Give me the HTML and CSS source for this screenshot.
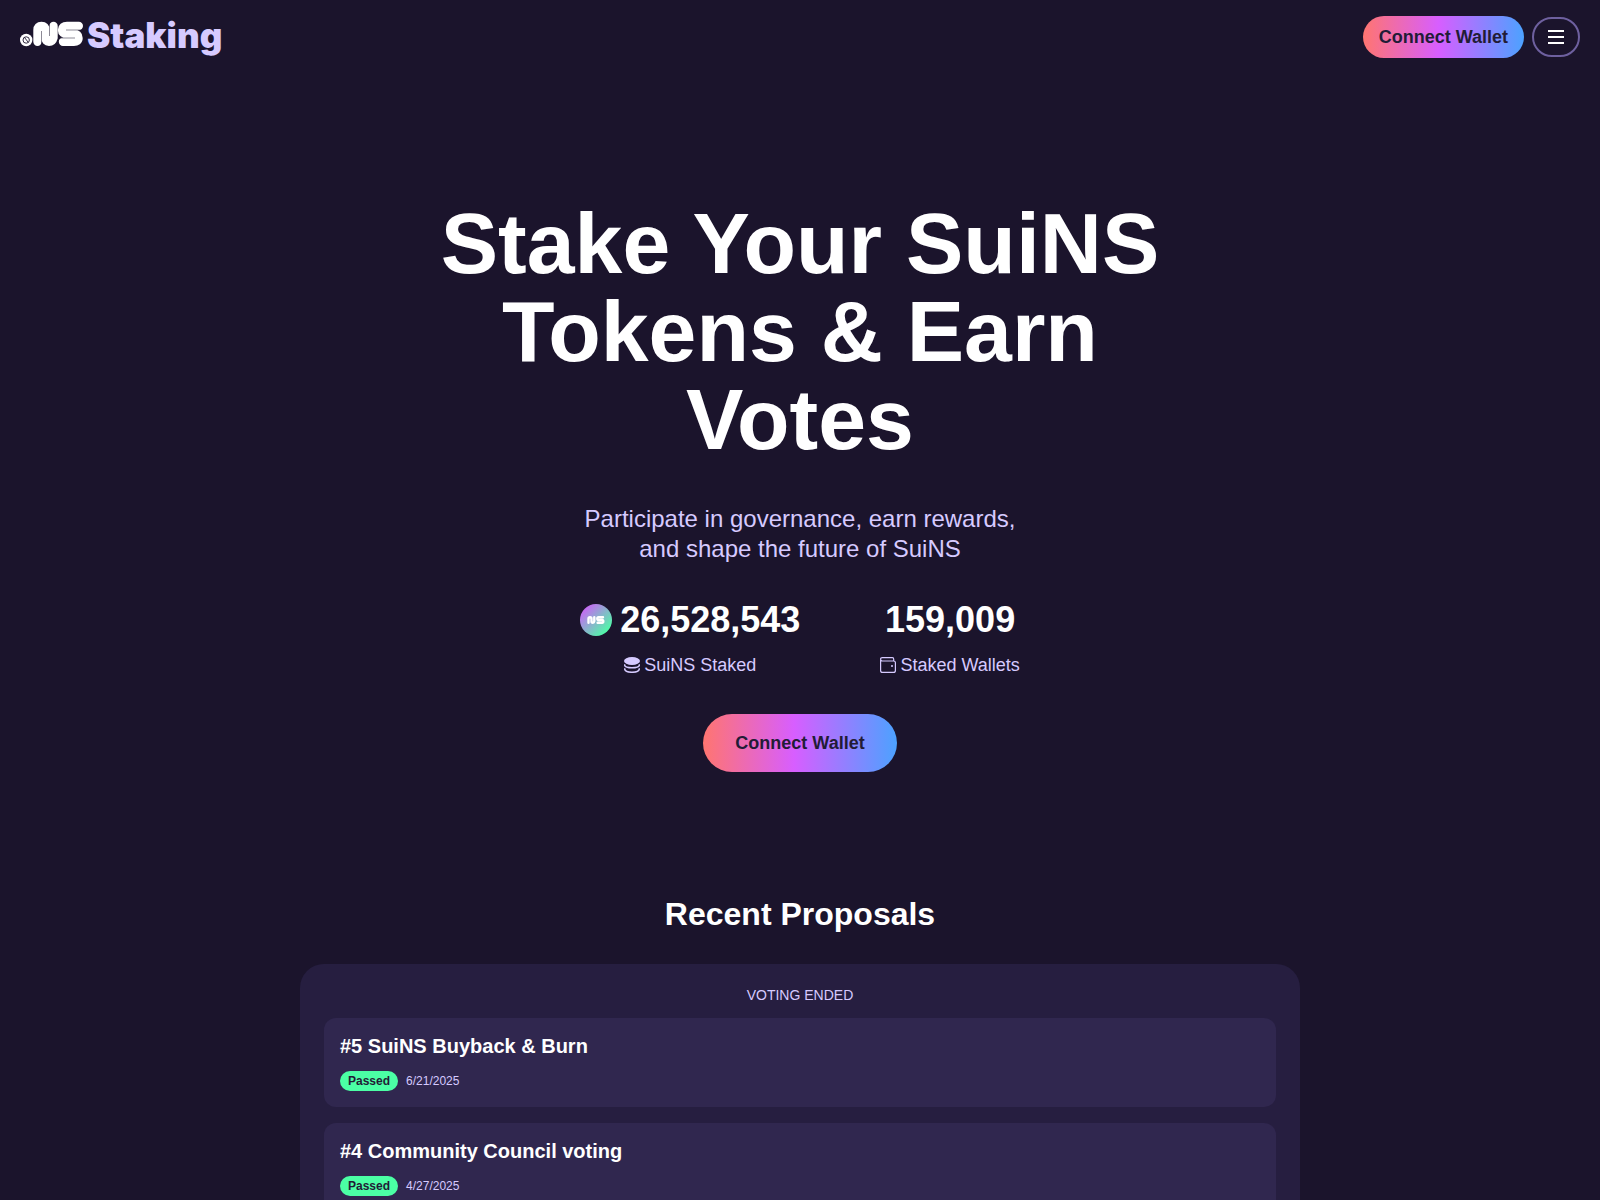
FILE: index.html
```html
<!DOCTYPE html>
<html lang="en">
<head>
<meta charset="utf-8">
<meta name="viewport" content="width=device-width, initial-scale=1">
<title>SuiNS Staking</title>
<link rel="stylesheet" href="styles.css">
</head>
<body>
<header class="header">
  <a class="brand" href="#">
    <svg class="brand-mark" width="64" height="32" viewBox="0 0 64 32" aria-label="SuiNS">
      <circle cx="6.200" cy="20" r="6.200" fill="#fff"/>
      <circle cx="6.200" cy="20" r="3.200" fill="none" stroke="#1b142c" stroke-width="0.900"/>
      <path d="M4.500 17.500l3.500 4.500" stroke="#1b142c" stroke-width="0.900"/>
      <g fill="none" stroke="#fff" stroke-width="8.400" stroke-linecap="round" stroke-linejoin="round">
        <path d="M17.500 21.800V10q0-4 4-4t4 4v7.800q0 4 3.500 4t4.500-4V6"/>
        <path d="M58.800 6H47q-5 0-5 4t5 4h7q4.500 0 4.500 4t-5 3.800H43"/>
      </g>
      <path d="M21.500 11v14M29.500 3v13M46 10h17M39 18h16" stroke="#1b142c" stroke-width="0.500"/>
    </svg>
    <span class="brand-name">Staking</span>
  </a>
  <div class="header-actions">
    <button class="button" type="button">Connect Wallet</button>
    <button class="menu-button" type="button" aria-label="Menu">
      <svg width="16" height="14" viewBox="0 0 16 14"><path d="M0 1h16M0 7h16M0 13h16" stroke="#fff" stroke-width="2"/></svg>
    </button>
  </div>
</header>
<main>
  <section class="hero">
    <h1 class="hero-title">Stake Your SuiNS Tokens &amp; Earn Votes</h1>
    <p class="hero-text">Participate in governance, earn rewards, and shape the future of SuiNS</p>
    <div class="stats">
      <div class="stat">
        <div class="stat-value">
          <svg width="32" height="32" viewBox="0 0 32 32" aria-hidden="true">
            <defs><linearGradient id="token" x1="0.100" y1="0.150" x2="0.850" y2="0.900"><stop offset="0" stop-color="#c966f5"/><stop offset="1" stop-color="#4bffa5"/></linearGradient></defs>
            <circle cx="16" cy="16" r="16" fill="url(#token)"/>
            <g fill="none" stroke="#fff" stroke-width="2.400" stroke-linecap="round" stroke-linejoin="round"><path d="M8.500 18.700v-4q0-1.500 1.500-1.500t1.500 1.500v2.500q0 1.500 1.300 1.500t1.500-1.500v-4"/><path d="M23 13.200h-4.500q-1.200 0-1.200 1.400t1.200 1.400h3.600q1.200 0 1.200 1.400t-1.200 1.300h-4.500"/></g>
          </svg>
          <span>26,528,543</span>
        </div>
        <div class="stat-label">
          <svg width="16" height="16" viewBox="0 0 16 16" aria-hidden="true"><ellipse cx="8" cy="4" rx="8" ry="4" fill="#d6caff"/><path d="M.6 7.200v.6c0 4 14.800 4 14.800 0v-.6M.6 11.300c0 5.300 14.800 5.300 14.800 0" fill="none" stroke="#d6caff" stroke-width="1.500"/></svg>
          <span>SuiNS Staked</span>
        </div>
      </div>
      <div class="stat">
        <div class="stat-value"><span>159,009</span></div>
        <div class="stat-label">
          <svg width="16" height="16" viewBox="0 0 16 16" aria-hidden="true"><path d="M.6 3v10.400q0 2 2 2h10.800q2 0 2-2V5.600q0-1.600-2-1.600H2.400Q.6 4 .6 2.300T2.400.6h10q1.300 0 1.300 1.600V4" fill="none" stroke="#d6caff" stroke-width="1.200"/><rect x="11" y="8" width="2" height="2" rx="1" fill="#d6caff"/></svg>
          <span>Staked Wallets</span>
        </div>
      </div>
    </div>
    <button class="button button-large" type="button">Connect Wallet</button>
  </section>
  <section class="proposals">
    <h2 class="proposals-title">Recent Proposals</h2>
    <div class="panel">
      <h3 class="panel-title">VOTING ENDED</h3>
      <a class="proposal" href="#">
        <h4 class="proposal-title">#5 SuiNS Buyback &amp; Burn</h4>
        <div class="proposal-meta"><span class="badge">Passed</span><time datetime="2025-06-21">6/21/2025</time></div>
      </a>
      <a class="proposal" href="#">
        <h4 class="proposal-title">#4 Community Council voting</h4>
        <div class="proposal-meta"><span class="badge">Passed</span><time datetime="2025-04-27">4/27/2025</time></div>
      </a>
    </div>
  </section>
</main>
</body>
</html>
```
FILE: styles.css
```css
* { box-sizing: border-box; }
body {
  margin: 0;
  background: #1b142c;
  color: #fff;
  font-family: "Liberation Sans", Arial, sans-serif;
  font-size: 18px;
}
h1, h2, h3, h4, p { margin: 0; }
a { color: inherit; text-decoration: none; }
svg { display: block; flex: none; }
.header {
  display: flex;
  align-items: center;
  justify-content: space-between;
  padding: 16px 20px;
}
.brand { display: flex; align-items: center; gap: 3px; }
.brand-name {
  font-family: Inter, sans-serif;
  font-size: 35px;
  font-weight: 900;
  line-height: 38px;
  padding-bottom: 4px;
  color: #d6caff;
}
.brand-mark { margin-bottom: 2px; }
.header-actions { display: flex; align-items: center; gap: 8px; }
.button {
  border: 0;
  border-radius: 30px;
  padding: 11px 16px;
  font: bold 18px/20px "Liberation Sans", Arial, sans-serif;
  color: #221c36;
  background: linear-gradient(90deg, #ff7570 0%, #d75eff 47%, #4ca2ff 100%);
  cursor: pointer;
}
.button-large { padding: 19px 32px; }
.menu-button {
  display: flex;
  align-items: center;
  justify-content: center;
  width: 48px;
  height: 40px;
  padding: 0;
  border: 2px solid #6e609f;
  border-radius: 20px;
  background: none;
  cursor: pointer;
}
.hero {
  display: flex;
  flex-direction: column;
  align-items: center;
  padding: 125px 20px 120px;
  text-align: center;
}
.hero-title {
  max-width: 760px;
  font-size: 86px;
  line-height: 88px;
}
.hero-text {
  max-width: 460px;
  margin-top: 41px;
  font-size: 24px;
  line-height: 30px;
  color: #d6caff;
}
.stats { display: flex; gap: 80px; margin-top: 36px; }
.stat { display: flex; flex-direction: column; align-items: center; gap: 13px; }
.stat-value {
  display: flex;
  align-items: center;
  gap: 8px;
  font-size: 36px;
  font-weight: bold;
  line-height: 40px;
}
.stat-label {
  display: flex;
  align-items: center;
  gap: 4px;
  line-height: 24px;
  color: #d6caff;
}
.stats + .button { margin-top: 37px; }
.proposals { max-width: 1040px; margin: 0 auto; padding: 0 20px 80px; }
.proposals-title { font-size: 32px; line-height: 44px; text-align: center; }
.panel {
  display: flex;
  flex-direction: column;
  gap: 16px;
  margin-top: 28px;
  padding: 24px;
  border-radius: 24px;
  background: #261e40;
}
.panel-title {
  font-size: 14px;
  font-weight: normal;
  line-height: 14px;
  text-align: center;
  color: #d6caff;
}
.proposal {
  display: flex;
  flex-direction: column;
  gap: 12px;
  padding: 16px;
  border-radius: 12px;
  background: #30274f;
}
.proposal-title { font-size: 20px; line-height: 25px; }
.proposal-meta {
  display: flex;
  align-items: center;
  gap: 8px;
  font-size: 12px;
  line-height: 20px;
  color: #d6caff;
}
.badge {
  padding: 0 8px;
  border-radius: 10px;
  background: #4bffa5;
  color: #221c36;
  font-weight: bold;
}
```
